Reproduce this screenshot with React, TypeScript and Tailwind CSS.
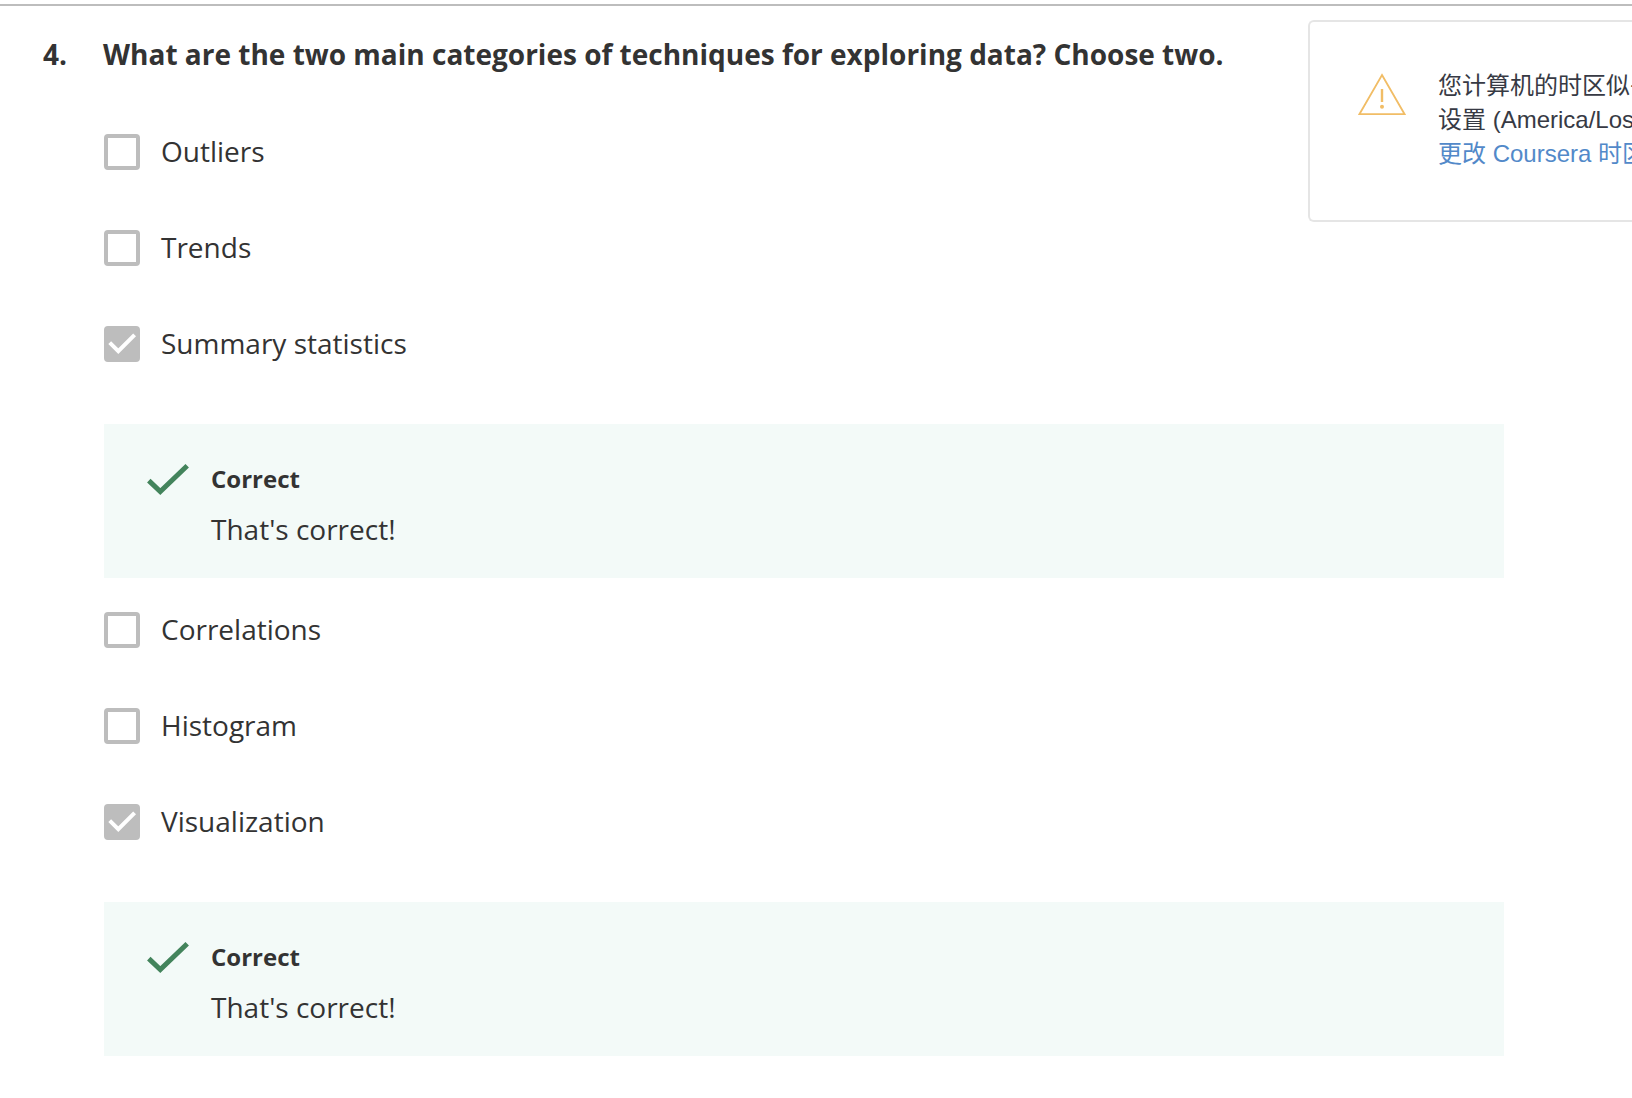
import React from "react";

type Option = { id: string; label: string; checked?: boolean; feedback?: string };

const options: Option[] = [
  { id: "outliers", label: "Outliers" },
  { id: "trends", label: "Trends" },
  { id: "summary", label: "Summary statistics", checked: true, feedback: "That's correct!" },
  { id: "correlations", label: "Correlations" },
  { id: "histogram", label: "Histogram" },
  { id: "visualization", label: "Visualization", checked: true, feedback: "That's correct!" },
];

function OptionRow({ option }: { option: Option }) {
  return (
    <div className="flex h-24 items-center">
      <span className="relative size-9 shrink-0">
        <input
          id={option.id}
          type="checkbox"
          defaultChecked={option.checked}
          className="peer block size-9 appearance-none rounded-sm border-4 border-[#bdbdbd] bg-white checked:bg-[#bdbdbd]"
        />
        <svg
          viewBox="0 0 36 36"
          aria-hidden="true"
          className="pointer-events-none absolute inset-0 hidden size-9 peer-checked:block"
        >
          <path d="M5.7 16.6 14.3 25.2 30.6 8.9" fill="none" stroke="#fff" strokeWidth="4" />
        </svg>
      </span>
      <label htmlFor={option.id} className="pb-0.5 pl-[21px] text-[28px] leading-9">
        {option.label}
      </label>
    </div>
  );
}

function Feedback({ text }: { text: string }) {
  return (
    <div className="mt-8 mb-1 flex gap-[22px] bg-[#f3faf8] pt-[39px] pb-[31px] pl-[43px]">
      <svg viewBox="0 0 42 32" aria-hidden="true" className="mt-px h-8 w-[42px] shrink-0">
        <path d="M1.8 16.6 13.3 27.6 40.2 1.8" fill="none" stroke="#43845c" strokeWidth="5" />
      </svg>
      <div>
        <p className="text-2xl leading-8 font-bold">Correct</p>
        <p className="mt-4 text-[28px] leading-9">{text}</p>
      </div>
    </div>
  );
}

function TimezoneNotice() {
  return (
    <aside className="absolute top-5 right-0 flex h-[202px] w-[324px] items-start overflow-hidden rounded-l-md border-2 border-r-0 border-[#e5e5e5] bg-white pt-[47px] pl-12 font-['Liberation_Sans','Noto_Sans_CJK_SC',sans-serif] text-2xl leading-[34px] text-[#373a44]">
      <svg viewBox="0 0 48 43" aria-hidden="true" className="mt-1 h-[43px] w-12 shrink-0">
        <path d="M24 2 46.6 41.2H1.4Z" fill="none" stroke="#f1bd66" strokeWidth="1.8" />
        <path d="M24 16V29" stroke="#f1bd66" strokeWidth="2.4" />
        <circle cx="24" cy="33.8" r="2" fill="#f1bd66" />
      </svg>
      <div className="ml-8 whitespace-nowrap">
        <p>您计算机的时区似乎</p>
        <p>设置 (America/Los</p>
        <a href="#timezone" className="block text-[#5289c9]">
          更改 Coursera 时区
        </a>
      </div>
    </aside>
  );
}

export default function App() {
  return (
    <div className="relative min-h-screen overflow-hidden bg-white pt-1 font-['Open_Sans',sans-serif] text-[#333]">
      <main className="border-t-2 border-[#bdbdbd] pt-[30px] pr-32 pl-[43px]">
        <h2 id="question" className="flex text-[28px] leading-9 font-bold">
          <span className="w-15 shrink-0">4.</span>
          <span>What are the two main categories of techniques for exploring data? Choose two.</span>
        </h2>
        <div role="group" aria-labelledby="question" className="mt-8 pl-[61px]">
          {options.map((option) => (
            <React.Fragment key={option.id}>
              <OptionRow option={option} />
              {option.feedback && <Feedback text={option.feedback} />}
            </React.Fragment>
          ))}
        </div>
      </main>
      <TimezoneNotice />
    </div>
  );
}
